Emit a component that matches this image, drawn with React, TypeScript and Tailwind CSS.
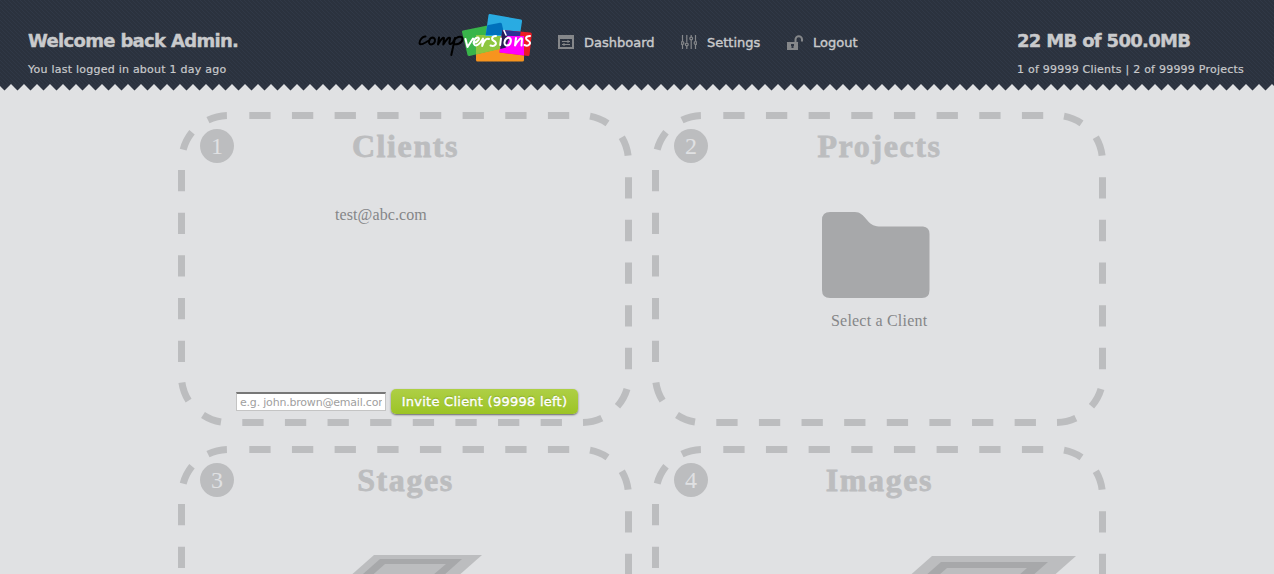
import React from "react";

const VERDANA = "font-['DejaVu_Sans',sans-serif]";
const SERIF = "font-['Liberation_Serif',serif]";

function DashedFrame() {
  return (
    <svg
      viewBox="0 0 454 314"
      className="[grid-area:1/1] w-[454px] h-[314px]"
      fill="none"
      stroke="#bcbdbf"
      strokeWidth="7"
      aria-hidden="true"
    >
      <path d="M71.3 3.5H392" strokeDasharray="21.3 21.36" />
      <path d="M64.3 310.5H384" strokeDasharray="21.3 21.32" />
      <path d="M3.5 58V251" strokeDasharray="21.3 21.36" />
      <path d="M450.5 65.2V258" strokeDasharray="21.3 21.36" />
      <path d="M30 8.2A46 46 0 0 1 48.9 3.5" />
      <path d="M5.2 37.6A46 46 0 0 1 14 20.3" />
      <path d="M412 4.1A46 46 0 0 1 429.5 11.3" />
      <path d="M443.8 25.2A46 46 0 0 1 450.1 43.7" />
      <path d="M3.9 270.5A46 46 0 0 0 10.6 288.7" />
      <path d="M25 303A46 46 0 0 0 43 310" />
      <path d="M449 277A46 46 0 0 1 439.5 294.3" />
      <path d="M423.8 306.2A46 46 0 0 1 405 310.5" />
    </svg>
  );
}

function Panel({
  n,
  title,
  children,
}: {
  n: number;
  title: string;
  children?: React.ReactNode;
}) {
  return (
    <section className="grid h-[314px] w-[454px]">
      <DashedFrame />
      <div className="[grid-area:1/1] flex flex-col">
        <div className="flex h-[68px] pt-[17px]">
          <span
            className={`ml-[22px] flex h-[34px] w-[34px] shrink-0 items-center justify-center rounded-full bg-[#bcbdbf] text-[24px] leading-[34px] text-[#e0e1e3] ${SERIF}`}
          >
            {n}
          </span>
          <h2
            className={`flex-1 pr-[55px] text-center text-[32px] leading-[34px] font-bold tracking-[1.6px] text-[#bcbdbf] [-webkit-text-stroke:0.8px_#bcbdbf] ${SERIF}`}
          >
            {title}
          </h2>
        </div>
        {children}
      </div>
    </section>
  );
}

function Logo() {
  return (
    <svg viewBox="0 0 120 56" className="h-[56px] w-[120px]" aria-label="compversions">
      <path d="M62 25H108Q109 25 109 26V50Q109 51.500 107.500 51.500H62.500Q61 51.500 61 50V26Q61 25 62 25Z" fill="#f7941e" />
      <path d="M48 20.500L86 12.800L91.500 37L54.500 46Q53 46.200 52.500 45L47 22Q46.800 20.800 48 20.500Z" fill="#39b54a" />
      <path d="M61 25H88.700L91.500 37.500L61 44.500Z" fill="#8dc63f" />
      <path d="M75 4L106 9.500Q107.300 10 107 11.500L104.800 26H70.500L73.500 5Q73.800 3.800 75 4Z" fill="#29abe2" />
      <path d="M72.300 15.200L85 12.700Q86.500 12.600 86.800 13.800L89.500 25H70.700Z" fill="#0071bc" />
      <path d="M87.500 20L115.500 22.600Q117 23 116.800 24.500L114.500 45Q114.200 46.300 113 46L84.500 42.500Z" fill="#ed1c24" />
      <path d="M87.500 20L105.700 21.700L105 26H86.700Z" fill="#2e3192" />
      <path d="M86.700 26H109V45.500L84.500 42.500Z" fill="#ff00ff" />
      <path d="M87.300 20L90 24L94 29L91 37.500L85.200 39L86.200 30Z" fill="#2b1b55" />
      <g fill="none" strokeLinecap="round" strokeLinejoin="round" strokeWidth="2">
        <path
          stroke="#000"
          d="M10.500 26.500C8 26 4.500 30 4.500 33C5 36 10 33 13 31M17.500 27.500C14 28 12.500 34 16 34.500C20.500 34.500 21.500 28 17.500 27.500M24 27.500L23 34.500C25 31 28 26.500 29 28L28.300 34.500C31 30 34 26.500 35 28C35.500 30 33 34 35.500 34C37.500 33.500 39 31 40 28L36.300 45M38.500 31C42 25.500 48 25.500 47.500 29.500C46.500 34 41 35 38.500 33.500"
        />
        <path
          stroke="#fff"
          d="M50.500 29L52.500 37L58 28.500M58.500 33C63.500 32 65.500 27.500 62.500 27.500C58.500 28 57.500 35.500 61 35.500C64 35 66 32 68 28.500L67.200 36C68.500 31 71 28 74 29M81 26C76.500 26 76 29.500 79 31C83 33 80 37 75.500 35.500M86 28.500L85.200 35M93.500 27.500C89 28.500 88 35.500 92 35.500C96 35.500 97.500 28.500 93.500 27.500M101 28L100 35.500C102.500 31 106.500 26.500 107 29L106.500 35.500M115 26C110.500 26 110 29 113 30.500C117.500 33 113.500 37 109.500 35"
        />
        <path stroke="#fff" strokeWidth="1.600" d="M89 20.500L91 25" />
      </g>
    </svg>
  );
}

function DashboardIcon() {
  return (
    <svg viewBox="0 0 16 14" className="h-[14px] w-4" aria-hidden="true">
      <path fill="#85878a" fillRule="evenodd" d="M0 0H16V14H0ZM2 4V12H14V4Z" />
      <path stroke="#85878a" d="M4 6.500H12M4 9.500H12M10 5V8M6 8V11" fill="none" />
    </svg>
  );
}

function SettingsIcon() {
  return (
    <svg viewBox="0 0 16 14" className="h-[14px] w-4" fill="none" stroke="#85878a" strokeWidth="1.200" aria-hidden="true">
      <path d="M1.500 0V6M1.500 10V14M5.800 0V7.500M5.800 11V14M10.200 0V2M10.200 5V14M14.500 0V6M14.500 10V14" />
      <circle cx="1.500" cy="8" r="1.400" />
      <circle cx="5.800" cy="9.500" r="1.400" />
      <circle cx="10.200" cy="3.500" r="1.400" />
      <circle cx="14.500" cy="8" r="1.400" />
    </svg>
  );
}

function LogoutIcon() {
  return (
    <svg viewBox="0 0 16 15" className="h-[15px] w-4" aria-hidden="true">
      <path fill="#85878a" d="M0 7H11V15H0Z" />
      <path fill="none" stroke="#85878a" strokeWidth="2" d="M8.500 7V4.500A3.200 3.200 0 0 1 15 4.500V6.500" />
      <path fill="#2d3441" d="M4 9H7V11H6.500V13H4.500V11H4Z" />
    </svg>
  );
}

function Folder() {
  return (
    <svg viewBox="0 0 108 87" className="h-[87px] w-[108px]" aria-hidden="true">
      <path
        fill="#a7a8aa"
        d="M8 0H33C38 0 41 3 45 8C49 13 53 14.500 59 14.500H101Q107.500 15 107.500 22V78Q107.500 86 100 86H8Q0 86 0 78V8Q0 0 8 0Z"
      />
    </svg>
  );
}

export default function App() {
  return (
    <div className="h-[574px] overflow-hidden bg-[#e0e1e3]">
      <header className={`grid h-[91px] w-[1274px] text-[#c9cacc] ${VERDANA}`}>
        <svg className="[grid-area:1/1] h-[91px] w-[1274px]" aria-hidden="true">
          <defs>
            <pattern id="weave" width="4" height="4" patternUnits="userSpaceOnUse">
              <rect width="4" height="4" fill="#2b323e" />
              <path d="M0 0h1v1H0zM1 1h1v1H1zM2 2h1v1H2zM3 3h1v1H3z" fill="#303846" />
            </pattern>
            <pattern id="teeth" y="84" width="13" height="7" patternUnits="userSpaceOnUse">
              <path d="M-2 0H11L4.500 6.500L-2 0ZM11 0H24L17.500 6.500Z" fill="#2d3441" />
            </pattern>
          </defs>
          <rect width="1274" height="84" fill="url(#weave)" />
          <rect y="84" width="1274" height="7" fill="url(#teeth)" />
        </svg>
        <div className="[grid-area:1/1] flex">
          <div className="w-[415px] pt-[28px] pl-[28px]">
            <h1 className="text-[18px] leading-[26px] font-bold tracking-[-0.68px] whitespace-nowrap [-webkit-text-stroke:0.4px_#c9cacc]">
              Welcome back Admin.
            </h1>
            <p className="mt-[8px] text-[11px] leading-4 tracking-[0.24px] whitespace-nowrap [-webkit-text-stroke:0.2px_#c9cacc]">
              You last logged in about 1 day ago
            </p>
          </div>
          <div className="w-[143px] pt-[10px]">
            <Logo />
          </div>
          <nav className="flex h-[84px] w-[459px] items-center text-[13px] leading-4 [-webkit-text-stroke:0.4px_#c9cacc]">
            <a className="flex w-[123px] items-center gap-[10px]"><DashboardIcon /><span className="pt-[2px]">Dashboard</span></a>
            <a className="flex w-[106px] items-center gap-[10px]"><SettingsIcon /><span className="pt-[2px]">Settings</span></a>
            <a className="flex items-center gap-[10px]"><LogoutIcon /><span className="pt-[2px]">Logout</span></a>
          </nav>
          <div className="pt-[28px]">
            <h1 className="text-[18px] leading-[26px] font-bold tracking-[-0.68px] whitespace-nowrap [-webkit-text-stroke:0.4px_#c9cacc]">
              22 MB of 500.0MB
            </h1>
            <p className="mt-[8px] text-[11px] leading-4 tracking-[0.23px] whitespace-nowrap [-webkit-text-stroke:0.2px_#c9cacc]">
              1 of 99999 Clients | 2 of 99999 Projects
            </p>
          </div>
        </div>
      </header>
      <main className="ml-[178px] grid w-[928px] grid-cols-[454px_454px] gap-5 pt-[21px]">
        <Panel n={1} title="Clients">
          <div className={`pt-[23px] pl-[157px] text-[16px] leading-6 tracking-[0.1px] text-[#858688] ${SERIF}`}>test@abc.com</div>
          <div className="mt-[162px] flex pl-[58px]">
            <input
              className={`mt-[3px] h-[19px] w-[150px] border border-t-2 border-[#c4c4c4] border-t-[#777] bg-white px-[3px] text-[11px] tracking-[-0.2px] placeholder:text-[#a0a0a0] ${VERDANA}`}
              placeholder="e.g. john.brown@email.com"
            />
            <button
              className={`ml-[5px] h-[25px] w-[187px] rounded-[5px] bg-linear-to-b from-[#aecf45] to-[#9cc424] text-[13px] tracking-[0.25px] whitespace-nowrap text-white shadow-[0_1px_2px_#666] [-webkit-text-stroke:0.4px_#fff] [text-shadow:0_-1px_1px_#7d9f1c] ${VERDANA}`}
            >
              Invite Client (99998 left)
            </button>
          </div>
        </Panel>
        <Panel n={2} title="Projects">
          <div className="pt-[32px] pl-[170px]"><Folder /></div>
          <div className={`pt-[10px] pl-[179px] text-[16px] leading-6 tracking-[0.2px] text-[#858688] ${SERIF}`}>Select a Client</div>
        </Panel>
        <Panel n={3} title="Stages">
          <svg viewBox="0 0 200 90" className="mt-[41px] ml-[104px] h-[90px] w-[200px]" aria-hidden="true">
            <path fill="#bcbdbf" d="M92 0H200L98 90H-10Z" />
            <path fill="#a7a8aa" d="M98 4H180L95 80H12Z" />
            <path fill="#bcbdbf" d="M103 9H164L85 76H27Z" />
          </svg>
        </Panel>
        <Panel n={4} title="Images">
          <svg viewBox="0 0 240 120" className="mt-[42px] ml-[184px] h-[120px] w-[240px]" aria-hidden="true">
            <path fill="#bcbdbf" d="M96 0H240L104 120H-40Z" />
            <path fill="#a7a8aa" d="M105 6H212L94 110H-13Z" />
            <path fill="#bcbdbf" d="M111 12H191L84 106H4Z" />
          </svg>
        </Panel>
      </main>
    </div>
  );
}
